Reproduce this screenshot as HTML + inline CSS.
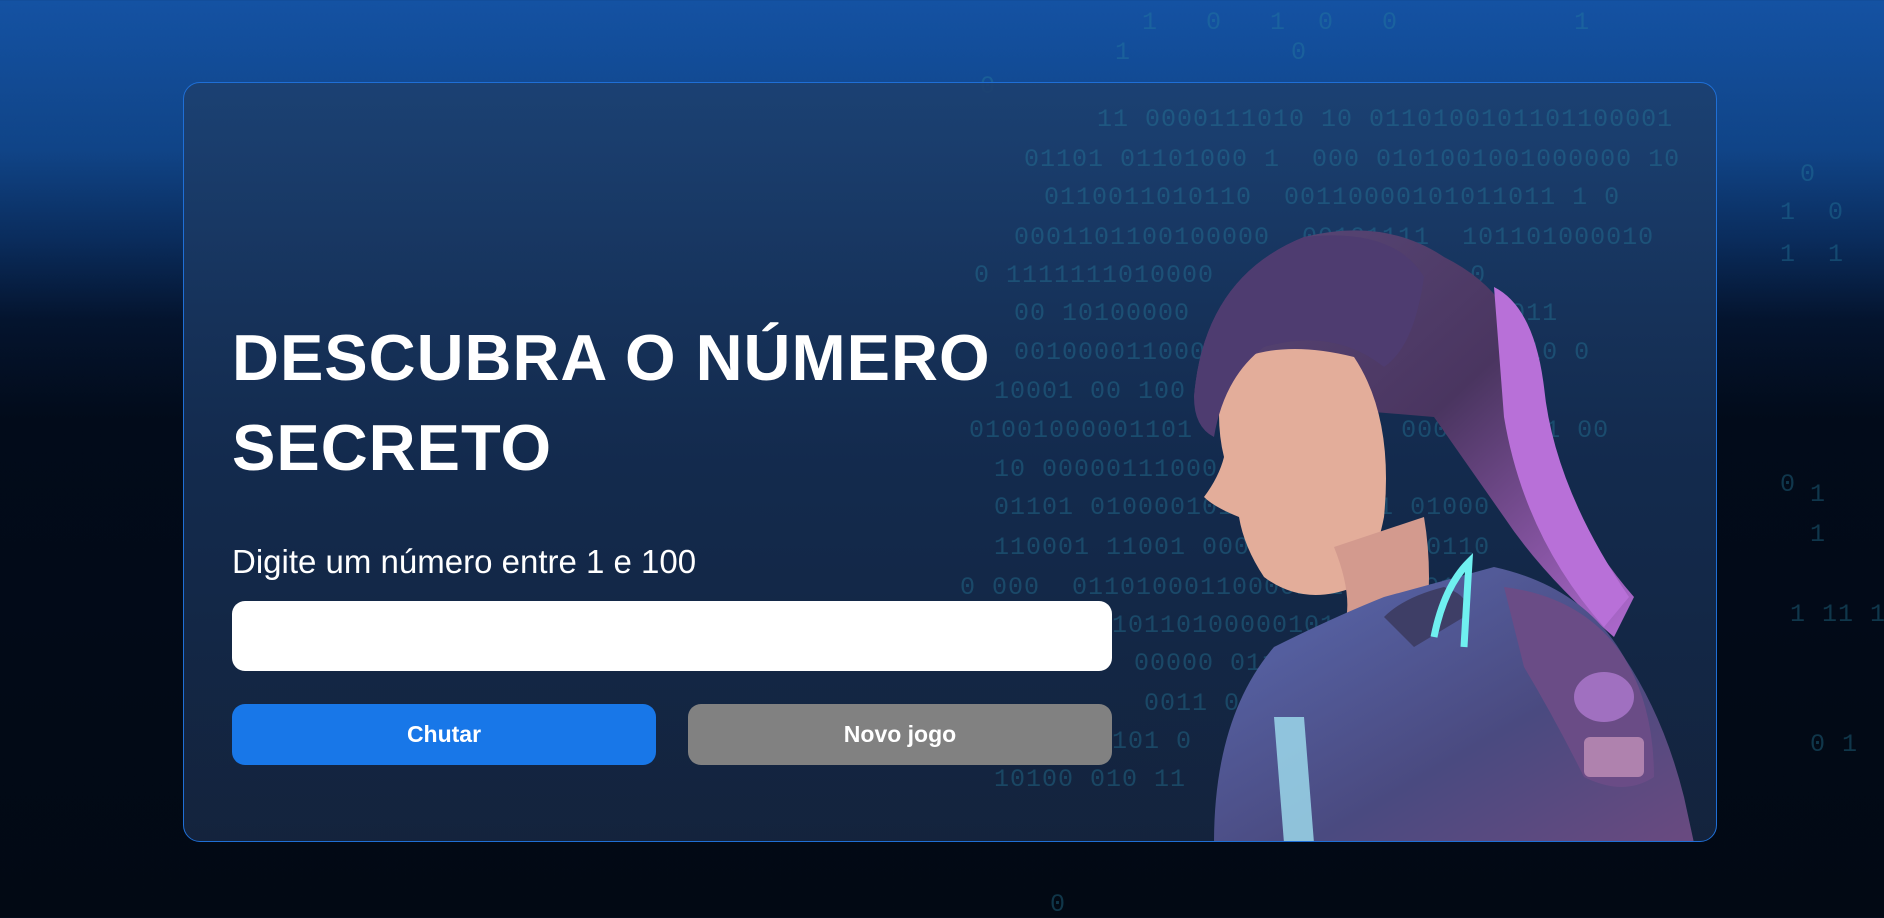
<!DOCTYPE html>
<html><head><meta charset="utf-8"><style>
*{margin:0;padding:0;box-sizing:border-box}
html,body{width:1884px;height:918px;overflow:hidden}
body{background:linear-gradient(180deg,#1452a3 0px,#104487 150px,#0a2c5c 240px,#04142e 320px,#020b1a 420px,#020914 918px);font-family:"Liberation Sans",sans-serif;position:relative}
.bin{position:absolute;font-family:"Liberation Mono",monospace;font-size:25px;color:rgba(40,130,160,0.38);white-space:pre;letter-spacing:1px}
.card{position:absolute;left:183px;top:82px;width:1534px;height:760px;border:1px solid #1f6fd6;border-radius:17px;background:linear-gradient(180deg,rgba(28,64,112,0.92),rgba(20,44,80,0.95) 50%,rgba(20,36,62,0.97));overflow:hidden}
h1{position:absolute;left:48px;top:230px;color:#fff;font-size:65px;line-height:90px;font-weight:bold;letter-spacing:1px;font-family:"Liberation Sans",sans-serif}
.lbl{position:absolute;left:48px;top:460px;color:#fff;font-size:33px}
.inp{position:absolute;left:48px;top:518px;width:880px;height:70px;background:#fff;border-radius:13px}
.btn{position:absolute;top:621px;width:424px;height:61px;border-radius:13px;color:#fff;font-weight:bold;font-size:23px;display:flex;align-items:center;justify-content:center}
</style></head><body>
<div class="bin" style="left:1110px;top:8px">  1   0   1  0   0           1</div>
<div class="bin" style="left:1115px;top:38px">1          0</div>
<div class="bin" style="left:980px;top:72px">0</div>
<div class="bin" style="left:1800px;top:160px">0</div>
<div class="bin" style="left:1780px;top:198px">1  0</div>
<div class="bin" style="left:1780px;top:240px">1  1</div>
<div class="bin" style="left:1780px;top:470px">0</div>
<div class="bin" style="left:1810px;top:480px">1</div>
<div class="bin" style="left:1810px;top:520px">1</div>
<div class="bin" style="left:1790px;top:600px">1 11 1</div>
<div class="bin" style="left:1810px;top:730px">0 1</div>
<div class="bin" style="left:1050px;top:890px">0</div>
<div class="card">
<div class="bin" style="left:913px;top:22px">11 0000111010 10 0110100101101100001</div>
<div class="bin" style="left:840px;top:62px">01101 01101000 1  000 0101001001000000 10</div>
<div class="bin" style="left:860px;top:100px">0110011010110  00110000101011011 1 0</div>
<div class="bin" style="left:830px;top:140px">0001101100100000  00101111  101101000010</div>
<div class="bin" style="left:790px;top:178px">0 1111111010000   1100000011 0 0</div>
<div class="bin" style="left:830px;top:216px">00 10100000      011  0     001011</div>
<div class="bin" style="left:830px;top:255px">001000011000       01111    001 10 0</div>
<div class="bin" style="left:810px;top:294px">10001 00 100      01100001   01101</div>
<div class="bin" style="left:785px;top:333px">01001000001101    1011000  0001100011 00</div>
<div class="bin" style="left:810px;top:372px">10 00000111000   1</div>
<div class="bin" style="left:810px;top:410px">01101 0100001011    11111 01000</div>
<div class="bin" style="left:810px;top:450px">110001 11001 000010   101000110</div>
<div class="bin" style="left:776px;top:490px">0 000  01101000110000101000 1010</div>
<div class="bin" style="left:880px;top:528px">010101101000001011     011  1   0</div>
<div class="bin" style="left:950px;top:566px">00000 011     00011 0</div>
<div class="bin" style="left:960px;top:606px">0011 00      0</div>
<div class="bin" style="left:880px;top:644px">101101 0    011</div>
<div class="bin" style="left:810px;top:682px">10100 010 11      1000</div>
<svg style="position:absolute;left:1000px;top:134px" width="534" height="626" viewBox="0 0 534 626">
<defs>
<linearGradient id="hair" x1="0" y1="0" x2="1" y2="1"><stop offset="0" stop-color="#5a4a7a"/><stop offset="0.5" stop-color="#4a3560"/><stop offset="1" stop-color="#b06ad0"/></linearGradient>
<linearGradient id="suit" x1="0" y1="0" x2="1" y2="1"><stop offset="0" stop-color="#5a6ab0"/><stop offset="0.6" stop-color="#4a4a80"/><stop offset="1" stop-color="#6a4a80"/></linearGradient>
</defs>
<path d="M10 180 Q20 60 120 20 Q200 0 260 40 Q300 60 320 90 Q350 120 360 200 Q380 300 450 380 L430 420 Q360 360 320 300 L250 200 Z" fill="url(#hair)"/>
<path d="M310 70 Q350 90 360 170 Q370 270 445 380 L420 410 Q340 320 320 200 Z" fill="#b870d8"/>
<path d="M40 150 Q90 120 170 140 Q210 200 200 300 Q190 350 170 370 Q120 390 80 360 Q60 330 55 300 Q30 290 20 280 Q35 260 40 240 Q30 200 40 150 Z" fill="#e3ad9a"/>
<path d="M10 180 Q20 60 120 20 Q210 10 240 60 Q230 130 200 150 Q150 110 80 130 Q40 160 30 220 Q10 210 10 180 Z" fill="#4e3c70"/>
<path d="M150 330 Q170 380 160 410 L240 420 Q250 360 240 300 Z" fill="#d39a8e"/>
<path d="M30 626 Q30 500 90 430 Q150 400 200 380 L310 350 Q400 370 440 440 Q480 500 500 580 L510 626 Z" fill="url(#suit)"/>
<path d="M320 370 Q400 380 440 440 Q470 490 470 560 Q440 580 400 560 Q370 500 340 450 Z" fill="#6a4c86"/>
<path d="M200 400 Q220 380 260 370 Q290 380 280 400 L230 430 Z" fill="#3e3e66"/>
<path d="M250 420 Q260 370 285 345 L280 430" stroke="#6ff0f0" stroke-width="7" fill="none"/>
<path d="M90 500 L100 626 L130 626 L120 500 Z" fill="#a0e0f0" opacity="0.8"/>
<ellipse cx="420" cy="480" rx="30" ry="25" fill="#a070c0"/>
<rect x="400" y="520" width="60" height="40" rx="6" fill="#c090b8" opacity="0.8"/>
</svg>
<h1>DESCUBRA O NÚMERO<br>SECRETO</h1>
<div class="lbl">Digite um número entre 1 e 100</div>
<div class="inp"></div>
<div class="btn" style="left:48px;background:#1877e8">Chutar</div>
<div class="btn" style="left:504px;background:#818181">Novo jogo</div>
</div>
</body></html>
